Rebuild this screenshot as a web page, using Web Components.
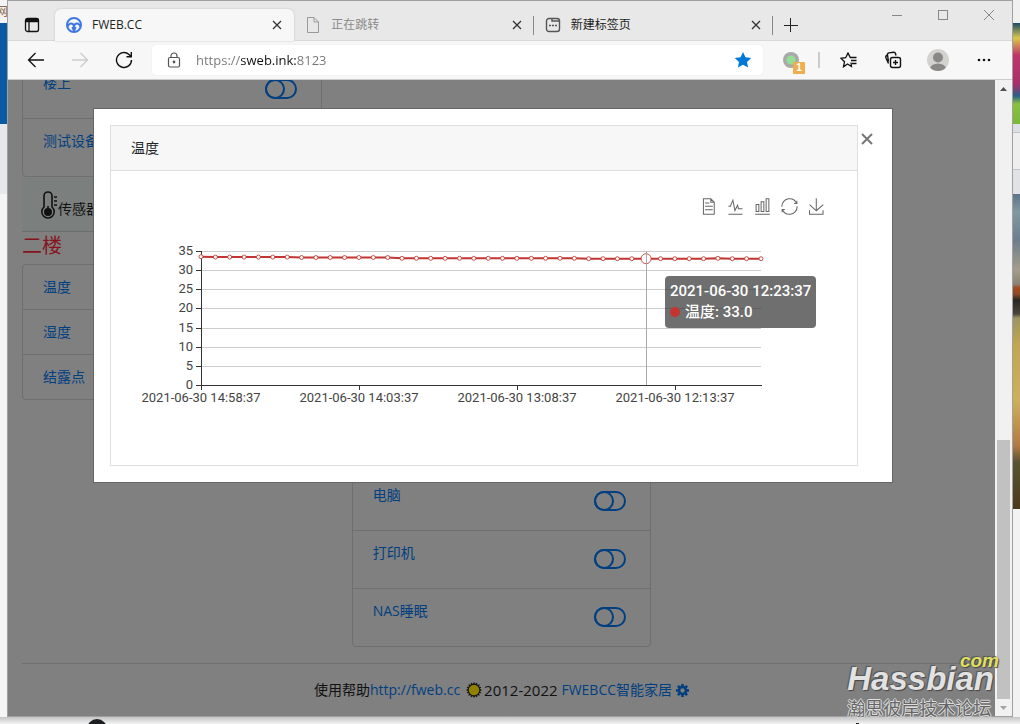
<!DOCTYPE html>
<html lang="zh-CN">
<head>
<meta charset="utf-8">
<title>FWEB.CC</title>
<style>
  html, body { margin: 0; height: 100%; }
  body { font: 14px/20px "Open Sans", "Noto Sans CJK SC", sans-serif; color: #111; overflow: hidden; }
</style>
</head>
<body>
<desktop-shell>
  <browser-window>
    <browser-tabs slot="tabs">
      <browser-tab active label="FWEB.CC"><svg width="16" height="16" viewBox="0 0 16 16" fill="none"><circle cx="8" cy="8" r="7" stroke="#3f78e0" stroke-width="2"/><path d="M1.500 9.500Q3 6.500 5 6.500Q7.200 6.500 8 9Q8.800 6.500 11 6.500Q13 6.500 14.500 9.500" stroke="#3f78e0" stroke-width="2"/><path d="M5.500 10.500Q8 8 10.500 10.500L9 14H7Z" fill="#3f78e0"/></svg></browser-tab>
      <browser-tab muted label="正在跳转"><svg width="16" height="16" viewBox="0 0 16 16" fill="none" stroke="#999"><path d="M2.500 .5H9L13.500 5V15.500H2.500ZM9 .5V5H13.500"/></svg></browser-tab>
      <browser-tab label="新建标签页"><svg width="16" height="16" viewBox="0 0 16 16" fill="none" stroke="#555" stroke-width="1.400"><rect x="1.500" y="1.500" width="13" height="13" rx="2.500"/><path d="M7 1.500V4H14.500M4 8.500H6M7 8.500H9M10 8.500H12"/></svg></browser-tab>
    </browser-tabs>
    <address-toolbar slot="toolbar"></address-toolbar>
    <dashboard-page slot="page">
      <div slot="left">
        <device-card>
          <device-row label="楼上" toggle></device-row>
          <device-row label="测试设备" toggle></device-row>
        </device-card>
        <sensor-heading>传感器</sensor-heading>
        <floor-title>二楼</floor-title>
        <device-card>
          <device-row label="温度"></device-row>
          <device-row label="湿度"></device-row>
          <device-row label="结露点"></device-row>
        </device-card>
      </div>
      <device-card slot="middle">
        <device-row label="电脑" toggle></device-row>
        <device-row label="打印机" toggle></device-row>
        <device-row label="NAS睡眠" toggle></device-row>
      </device-card>
      <page-footer slot="footer"></page-footer>
      <chart-dialog slot="dialog" heading="温度"><history-chart></history-chart></chart-dialog>
    </dashboard-page>
    <scroll-track slot="scroll"></scroll-track>
  </browser-window>
  <forum-mark slot="mark"></forum-mark>
</desktop-shell>

<script>
const define = (name, render, after) => customElements.define(name, class extends HTMLElement {
  connectedCallback() {
    if (this.shadowRoot) return;
    const root = this.attachShadow({ mode: "open" });
    const t = document.createElement("template");
    t.innerHTML = `<style>*{box-sizing:border-box}button{border:0;padding:0;margin:0;background:none;font:inherit;color:inherit;display:grid;place-items:center}a{text-decoration:none;color:#003f80}svg{display:block}</style>` + render(this);
    root.append(t.content.cloneNode(true));
    if (after) after(this, root);
  }
});

define("desktop-shell", () => `<style>
  :host{display:grid;grid-template-columns:7px minmax(0,1fr) 7px;grid-template-rows:minmax(0,1fr) 7px;height:100vh;position:relative;background:#fff;overflow:hidden}
  .left{background:linear-gradient(#f4f4f4 0 23px,#0a5ba4 23px 124px,#e6e8eb 124px 194px,#f5f5f5 194px);overflow:hidden;font-size:12px;line-height:16px;color:#8a6a50}
  .left span{position:relative;left:-4px;top:4px}
  .right{background:linear-gradient(transparent 0 23px,transparent 124px,#dcdfe4 124px 132px,#bfc4cb 132px 133px,#eee 133px 169px,#bfc4cb 169px 170px,#e0e2e6 170px 194px,#5f7389 194px,#8199a0 212px,#6f7d8c 240px,#a39d8c 270px,#8a8478 284px,#a04a20 288px,#8e4b28 294px,#2a2622 300px,#4a463c 314px,#9c9464 318px,#c0a850 345px,#cdb05a 400px,#b07a44 446px,#5a5236 462px,#4a3a1c 509px,#f2f2f2 509px),linear-gradient(#f0f0f0 0 23px,#1d4a66 23px,#d8c84a 38px,#c0356a 55px,#a83068 84px,#2b5f88 96px,#8cc040 104px,#79b83a 124px)}
  .bottom{grid-column:1/-1;background:linear-gradient(#c4c4c4,#f4f4f4);position:relative;overflow:hidden}
  i{position:absolute;left:87px;top:2px;width:20px;height:20px;border-radius:50%;background:#1c1e20}
  b{position:absolute;left:856px;top:6px;width:3px;height:2px;background:#222}
  .mark{position:absolute;right:21px;bottom:7px}
 </style><div class="left"><span>网</span></div><slot></slot><div class="right"></div><div class="bottom"><i></i><b></b></div><div class="mark"><slot name="mark"></slot></div>`);

define("browser-window", () => `<style>
  :host{display:flex;flex-direction:column;min-width:0;border:1px solid #a0a0a0;background:#e8e8e8;overflow:hidden}
  .view{display:flex;flex:1;min-height:0;border-top:1px solid #ccc}
  ::slotted([slot=page]){flex:1;min-width:0}
 </style><slot name="tabs"></slot><slot name="toolbar"></slot><div class="view"><slot name="page"></slot><slot name="scroll"></slot></div>`);

define("browser-tabs", () => `<style>
  :host{display:flex;height:40px;box-sizing:border-box;border-bottom:1px solid #d8d8d8;background:#e8e8e8}
  .menu{width:47px;padding:8px 0 0}
  .tabs{display:flex;padding-top:8px;flex:0 1 718px;min-width:0}
  .add{width:36px;padding-top:8px}
  .win{display:flex;margin-left:auto;height:28px}.win button{width:46px}
 </style><button class="menu" aria-label="标签页操作"><svg width="16" height="16" viewBox="0 0 16 16" fill="none" stroke="#111" stroke-width="1.300"><rect x="1.500" y="1.500" width="13" height="13" rx="2"/><path d="M1.500 3.500H14.500" stroke-width="3.500"/><path d="M5 4V14"/></svg></button>
 <div class="tabs"><slot></slot></div>
 <button class="add" aria-label="新建标签页"><svg width="14" height="14" viewBox="0 0 14 14" stroke="#222" fill="none"><path d="M6.500 0V14M0 7.500H14"/></svg></button>
 <div class="win"><button aria-label="最小化"><svg width="12" height="12" viewBox="0 0 12 12" stroke="#888"><path d="M1 6.500H11"/></svg></button><button aria-label="最大化"><svg width="12" height="12" viewBox="0 0 12 12" stroke="#888" fill="none"><rect x="1.500" y="1.500" width="9" height="9"/></svg></button><button aria-label="关闭"><svg width="12" height="12" viewBox="0 0 12 12" stroke="#888"><path d="M1 1L11 11M11 1L1 11"/></svg></button></div>`);

define("browser-tab", el => `<style>
  :host{display:flex;flex:1;min-width:0;align-items:center;padding:0 10px 0 11px;gap:10px;font-size:12px;color:#222;position:relative;height:32px;border-radius:6px 6px 0 0}
  :host([active]){background:#f7f7f7;box-shadow:0 0 2px #bbb}
  :host([muted]){color:#8a8a8a}
  :host(:not([active]))::after{content:"";position:absolute;right:0;top:7px;height:19px;width:1px;background:#888}
  span{flex:1;white-space:nowrap}button{width:14px;height:14px}
 </style><slot></slot><span>${el.getAttribute("label")}</span><button aria-label="关闭标签页"><svg width="10" height="10" viewBox="0 0 10 10" stroke="#333" stroke-width="1.300"><path d="M1 1L9 9M9 1L1 9"/></svg></button>`);

define("address-toolbar", () => `<style>
  :host{display:flex;align-items:center;height:38px;background:#f7f7f7;padding:0 5px 0 6px}
  button{width:44px;height:30px;flex:none}.wide{width:46px}
  form{flex:1;display:flex;align-items:center;height:30px;background:#fff;border-radius:4px;margin:0 6px;box-shadow:0 0 1px #ddd;min-width:0}
  form button{width:40px}form button:first-child{width:44px}
  input{flex:1;min-width:0;border:0;outline:0;padding:0;margin:0;font:13px/20px "Open Sans",sans-serif;color:#767676;height:20px;-webkit-text-fill-color:transparent;background:linear-gradient(90deg,#767676 0 45px,#111 45px 101px,#767676 101px) text;-webkit-background-clip:text}
  hr{width:2px;height:16px;background:#ccc;border:0;margin:0 7px 0 5px;flex:none}
 </style>
 <button aria-label="后退"><svg width="18" height="16" viewBox="0 0 18 16" fill="none" stroke="#111" stroke-width="1.300"><path d="M17 8H1.500M8.500 1L1.500 8L8.500 15"/></svg></button>
 <button aria-label="前进"><svg width="18" height="16" viewBox="0 0 18 16" fill="none" stroke="#ccc" stroke-width="1.300"><path d="M1 8H16.500M9.500 1L16.500 8L9.500 15"/></svg></button>
 <button aria-label="刷新"><svg width="18" height="18" viewBox="0 0 18 18" fill="none" stroke="#111" stroke-width="1.400"><path d="M16.500 9A7.500 7.500 0 1 1 14 3.400L16 5.500M16.300 1V5.700H11.500"/></svg></button>
 <form><button type="button" aria-label="网站信息"><svg width="14" height="16" viewBox="0 0 14 16" fill="none" stroke="#555" stroke-width="1.200"><rect x="1.500" y="5.500" width="11" height="9.500" rx="1.500"/><path d="M4 5.500V4A3 3 0 0 1 10 4V5.500"/><circle cx="7" cy="10" r=".8" fill="#555"/></svg></button>
 <input aria-label="地址" value="https://sweb.ink:8123"><button type="button" aria-label="收藏"><svg width="18" height="18" viewBox="0 0 18 18" fill="#0078d7"><path d="M9 1L11.500 6.200L17.200 6.900L13 10.900L14.100 16.600L9 13.800L3.900 16.600L5 10.900L.8 6.900L6.500 6.200Z"/></svg></button></form>
 <button aria-label="扩展"><svg width="30" height="30" viewBox="0 0 30 30"><circle cx="15" cy="15" r="8" fill="#a9a9a9"/><circle cx="15" cy="15" r="4.500" fill="#93df93"/><rect x="17" y="17" width="12" height="12" rx="1" fill="#f0ad4e"/><text x="23" y="26" text-anchor="middle" font-family="Liberation Sans" font-size="10" font-weight="700" fill="#fff">1</text></svg></button><hr>
 <button aria-label="收藏夹"><svg width="18" height="16" viewBox="0 0 18 16" fill="none" stroke="#111" stroke-width="1.300"><path d="M11 10.500L11.500 14.500L7.500 12L3.500 14.800L4.500 9.800L1 6.300L5.700 5.700L8 1L10.300 5.500H16.500M11 8.500H16.500M12 11.500H16.500"/></svg></button>
 <button aria-label="集锦"><svg width="18" height="18" viewBox="0 0 18 18" fill="none" stroke="#111" stroke-width="1.400"><rect x="6.500" y="6.500" width="10" height="10" rx="2"/><path d="M11.500 9V14M9 11.500H14M4.500 12.500L2 7Q1.200 5 3 4.200M4.500 10.500L3.500 4Q3.200 2.200 5 1.900L9.500 1.200Q11 1 11.500 2.500L12 4.500"/></svg></button>
 <button class="wide" aria-label="用户"><svg width="22" height="22" viewBox="0 0 22 22"><defs><clipPath id="c"><circle cx="11" cy="11" r="11"/></clipPath></defs><g clip-path="url(#c)"><rect width="22" height="22" fill="#d4d2cf"/><circle cx="11" cy="8.500" r="5" fill="#8a8886"/><ellipse cx="11" cy="20" rx="8" ry="5.500" fill="#8a8886"/></g></svg></button>
 <button class="wide" aria-label="设置及其他"><svg width="14" height="4" viewBox="0 0 14 4" fill="#111"><circle cx="2" cy="2" r="1.300"/><circle cx="7" cy="2" r="1.300"/><circle cx="12" cy="2" r="1.300"/></svg></button>`);

define("scroll-track", () => `<style>
  :host{display:flex;flex-direction:column;width:17px;background:#f1f1f1}
  button{height:17px;width:17px}.gap{flex:343}.thumb{flex:259;margin:0 2px;background:#c1c1c1}
 </style><button aria-label="向上"><svg width="7" height="4" viewBox="0 0 7 4"><path d="M3.500 0L7 4H0Z" fill="#505050"/></svg></button><div class="gap"></div><div class="thumb"></div><button aria-label="向下"><svg width="7" height="4" viewBox="0 0 7 4"><path d="M3.500 4L7 0H0Z" fill="#a3a3a3"/></svg></button>`);

define("dashboard-page", () => `<style>
  :host{display:flex;flex-direction:column;background:#808080;position:relative;overflow:hidden}
  main{flex:1;min-height:0;margin-top:-20px;display:grid;grid-template-columns:repeat(3,minmax(0,1fr));gap:30px;padding:0 14px}
  ::slotted([slot=middle]){align-self:end}
  .over{position:absolute;inset:0;display:flex;justify-content:center;align-items:flex-start;padding:29px 17px 0 0}
 </style><main><slot name="left"></slot><slot name="middle"></slot></main><slot name="footer"></slot><div class="over"><slot name="dialog"></slot></div>`);

define("device-card", () => `<style>:host{display:block;border:1px solid #6f6f6f;border-radius:4px}::slotted(:not(:last-child)){border-bottom:1px solid #6f6f6f}::slotted(:last-child){margin-bottom:-1px}</style><slot></slot>`);

define("device-row", el => {
  const toggle = el.hasAttribute("toggle"), label = el.getAttribute("label");
  return `<style>
  :host{display:flex;align-items:flex-start;justify-content:space-between;box-sizing:border-box;height:45px;padding:12px 24px 0 20px}
  :host([toggle]){height:58px}
  input{appearance:none;margin:6px 0 0;width:32px;height:20px;border:2px solid #003f80;border-radius:10px}
  input::before{content:"";display:block;box-sizing:border-box;width:20px;height:20px;margin:-2px;border:2px solid #003f80;border-radius:50%}
 </style><a href="#">${label}</a>${toggle ? `<input type="checkbox" role="switch" aria-label="${label}">` : ""}`;
});

define("sensor-heading", () => `<style>
  :host{display:flex;align-items:center;height:54px;margin-top:1px;padding-left:18px;background:#7b7f7e;border-bottom:1px solid #6b6e6d;box-sizing:border-box}
  span{padding-top:8px}
 </style><svg width="18" height="30" viewBox="0 0 18 30" fill="none" stroke="#111" stroke-width="1.600"><path d="M4 17V6A4 4 0 0 1 12 6V17A6.200 6.200 0 1 1 4 17Z"/><circle cx="8" cy="22" r="3.200" fill="#111"/><path d="M8 21V16M14 7H17M14 11H17M14 15H17"/></svg><span><slot></slot></span>`);

define("floor-title", () => `<style>:host{display:block;font-size:20px;line-height:28px;height:32px;color:#85151c}</style><slot></slot>`);

define("page-footer", () => {
  const pts = [];
  for (let i = 0; i < 32; i++) { const r = i % 2 ? 6 : 8, a = i * Math.PI / 16; pts.push((8 + r * Math.cos(a)).toFixed(2) + "," + (8 + r * Math.sin(a)).toFixed(2)); }
  const teeth = [0, 45, 90, 135].map(a => `<rect x="4.800" y="0" width="2.400" height="12" transform="rotate(${a} 6 6)"/>`).join("");
  return `<style>
  :host{display:block;margin:16px 14px 0;border-top:1px solid #6f6f6f}
  p{margin:0;height:52px;display:flex;align-items:center;justify-content:center;white-space:pre}
  span{font-size:15px}
  svg{margin:0 2px 0 6px}.gear{margin:0 0 0 4px}
 </style><p>使用帮助<a href="#">http://fweb.cc</a><svg width="16" height="16" viewBox="0 0 16 16"><polygon points="${pts.join(" ")}" fill="#111"/><circle cx="8" cy="8" r="5.300" fill="#8f8000"/></svg><span>2012-2022 </span><a href="#">FWEBCC智能家居</a><svg class="gear" width="13" height="13" viewBox="0 0 12 12" fill="#003f80">${teeth}<circle cx="6" cy="6" r="4.400"/><circle cx="6" cy="6" r="2" fill="#808080"/></svg></p>`;
});

define("chart-dialog", el => `<style>
  :host{display:flex;align-items:flex-start;flex:0 1 798px;min-width:0;box-sizing:border-box;background:#fff;box-shadow:0 0 0 1px #666;padding:16px 0 16px 16px}
  section{flex:1;min-width:0;border:1px solid #dfdfdf}
  h2{margin:0;font-size:14px;line-height:20px;font-weight:400;color:#212529;padding:12px 20px;background:#f7f7f7;border-bottom:1px solid #dfdfdf}
  button{width:18px;height:28px;margin-right:16px}
 </style><section><h2>${el.getAttribute("heading")}</h2><slot></slot></section><button aria-label="关闭"><svg width="12" height="12" viewBox="0 0 12 12" stroke="#777" stroke-width="2"><path d="M1 1L11 11M11 1L1 11"/></svg></button>`);

define("history-chart", () => {
  const icons = [
    ["数据视图", "M17.500,17.300H33M45.400,29.500h-28M11.500,2v56H51V14.800L38.400,2H11.500zM38.400,2.200v12.700H51M45.400,41.700h-28"],
    ["切换为折线图", "M4.100,28.900h7.100l9.300-22l7.400,38l9.700-19.700l3,12.800h14.900M4.100,58h51.400"],
    ["切换为柱状图", "M6.700,22.900h10V48h-10V22.900zM24.900,13h10v35h-10V13zM43.200,2h10v46h-10V2zM3.100,58h53.700"],
    ["还原", "M47,18.900h9.800V8.700M56.300,20.100C52.100,9,40.500,0.600,26.800,2.100C12.600,3.700,1.600,16.200,2.100,30.600M13,41.100H3.100v10.200M3.700,39.900c4.200,11.100,15.800,19.500,29.500,18c14.200-1.600,25.200-14.100,24.700-28.500"],
    ["保存为图片", "M4.700,22.900L29.300,45.500L54.700,23.400M4.600,43.600L4.600,58L53.800,58L53.800,43.600M29.200,45.100L29.200,0"]
  ];
  const tools = icons.map(([n, d]) => `<button aria-label="${n}"><svg width="17" height="17" viewBox="-1 -1 62 62" fill="none" stroke="#666" stroke-width="3.700"><path d="${d}"/></svg></button>`).join("");
  const left = 90, right = 650, base = 165, unit = 134 / 35, step = (right - left) / 39;
  let grid = "", axis = "", dots = "";
  for (let v = 0; v <= 35; v += 5) {
    const y = Math.round(base - v * unit) + .5;
    if (v) grid += `<path d="M${left} ${y}H${right}" stroke="#ccc"/>`;
    axis += `<path d="M${left - 5} ${y}H${left}" stroke="#333"/><text x="82" y="${y + 3}" text-anchor="end">${v}</text>`;
  }
  ["2021-06-30 14:58:37", "2021-06-30 14:03:37", "2021-06-30 13:08:37", "2021-06-30 12:13:37"].forEach((t, i) => {
    const x = left + i * 158;
    axis += `<path d="M${x + .5} ${base}v5" stroke="#333"/><text x="${x}" y="182" text-anchor="middle">${t}</text>`;
  });
  const pts = Array.from({ length: 40 }, (_, i) => {
    const v = i === 0 ? 33.5 : i < 7 ? 33.4 : i < 14 ? 33.3 : i < 27 ? 33.1 : i === 36 ? 33.1 : 33;
    return [left + i * step, base - v * unit];
  });
  pts.forEach(([x, y], i) => dots += `<circle cx="${x.toFixed(1)}" cy="${y.toFixed(1)}" r="${i === 31 ? 5 : 2}" fill="#fff" stroke="#c23531" stroke-opacity=".85"/>`);
  return `<style>
  :host{display:block;position:relative;padding-top:21px}
  .tools{display:flex;justify-content:flex-end;padding-right:27px}.tools button{width:27px;height:28px}
  text{font:13px Roboto,sans-serif;fill:#444}
  .tip{position:absolute;left:554px;top:105px;padding:5px;border-radius:4px;background:rgba(50,50,50,.7);color:#fff;font:500 15px/21px Roboto,"Noto Sans CJK SC",sans-serif;white-space:nowrap}
  .tip i{display:inline-block;width:10px;height:10px;border-radius:50%;background:#c23531;margin-right:5px}
 </style><div class="tools">${tools}</div>
 <svg width="100%" viewBox="0 0 746 245" fill="none" role="img" aria-label="温度">${grid}
 <path d="M${left + .5} 31V${base + 1}M${left} ${base + .5}H${right + 1}" stroke="#333"/>${axis}
 <polyline points="${pts.map(p => p.map(n => n.toFixed(1)).join()).join(" ")}" stroke="#c23531" stroke-width="2"/>${dots}
 <path d="M535.500 31V165" stroke="#aaa"/></svg>
 <div class="tip">2021-06-30 12:23:37<br><i></i>温度: 33.0</div>`;
});

define("forum-mark", () => `<style>
  :host{display:block;position:relative;color:#e2e2e2;font-family:"Liberation Sans",sans-serif;pointer-events:none;padding-right:5px}
  strong{display:block;font-size:33px;line-height:36px;font-style:italic;text-shadow:1px 1px 1px #444,-1px -1px 1px #555}
  em{position:absolute;right:0;top:-10px;font-size:19px;line-height:20px;font-weight:700;color:#e0e060;text-shadow:1px 1px 1px #444,-1px -1px 1px #555}
  small{display:block;font:18px/20px "Noto Sans CJK SC",sans-serif;color:#666;text-shadow:1px 0 #ddd,-1px 0 #ddd,0 1px #ddd,0 -1px #ddd}
 </style><strong>Hassbian</strong><em>com</em><small>瀚思彼岸技术论坛</small>`);
</script>
</body>
</html>
